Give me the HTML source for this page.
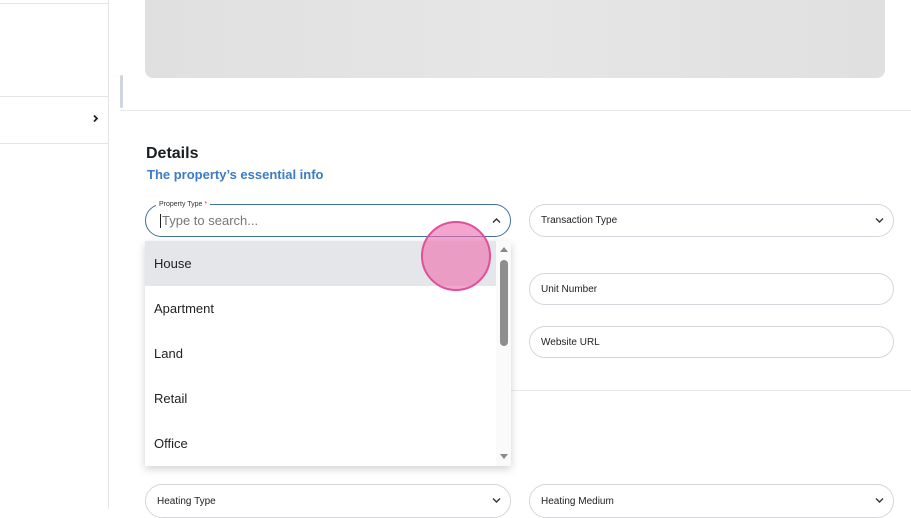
<!DOCTYPE html>
<html><head><style>
*{box-sizing:border-box;margin:0;padding:0}
body{width:911px;height:509px;overflow:hidden;background:#fff;font-family:"Liberation Sans",Arial,sans-serif;position:relative;color:#222}
.a{position:absolute}
.f{position:absolute;border:1px solid #d3d6da;border-radius:17px;font-size:10px;color:#222;padding-left:11px;display:flex;align-items:center}
.chev{position:absolute;right:9px;top:50%;margin-top:-4px}
.item{height:45px;line-height:45px;padding-left:9px;font-size:13px;color:#222}
</style></head><body>
<div class="a" style="left:0;top:0;width:109px;height:509px;border-right:1px solid #e3e5e8"></div>
<div class="a" style="left:0;top:3px;width:108px;height:1px;background:#e3e5e8"></div>
<div class="a" style="left:0;top:96px;width:108px;height:1px;background:#e3e5e8"></div>
<div class="a" style="left:0;top:143px;width:108px;height:1px;background:#e3e5e8"></div>
<svg class="a" style="left:92px;top:114px" width="7" height="9"><path d="M2 1.5L5 4.5L2 7.5" stroke="#222" stroke-width="1.8" fill="none"/></svg>
<div class="a" style="left:120px;top:75px;width:3px;height:33px;background:#cfd6e2;border-radius:2px"></div>
<div class="a" style="left:145px;top:-10px;width:740px;height:88px;background:linear-gradient(90deg,#e0e0e0,#e6e6e6 50%,#e0e0e0);border-radius:8px"></div>
<div class="a" style="left:120px;top:110px;width:791px;height:1px;background:#e6e8ea"></div>
<div class="a" style="left:511px;top:390px;width:400px;height:1px;background:#e6e8ea"></div>
<div class="a" style="left:146px;top:145px;font-size:16px;font-weight:bold;color:#1a1d22">Details</div>
<div class="a" style="left:147px;top:167px;font-size:13px;font-weight:bold;color:#3b7cc4">The property’s essential info</div>

<div class="f" style="left:145px;top:204px;width:366px;height:33px;border-color:#41709e;font-size:13px;color:#777;padding-left:14px"><span style="border-left:1px solid #222;padding-left:1px;line-height:14px">Type to search...</span>
<svg class="chev" width="9" height="7"><path d="M1 5.5L4.5 2L8 5.5" stroke="#333" stroke-width="1.4" fill="none"/></svg></div>
<div class="a" style="left:156px;top:200px;background:#fff;padding:0 3px;font-size:7px;color:#333;line-height:9px">Property Type <span style="color:#d33">*</span></div>

<div class="a" style="left:145px;top:241px;width:366px;height:225px;background:#fff;box-shadow:0 3px 8px rgba(0,0,0,.18);overflow:hidden">
<div class="item" style="background:#e5e6ea;width:351px">House</div>
<div class="item">Apartment</div>
<div class="item">Land</div>
<div class="item">Retail</div>
<div class="item">Office</div>
<div class="a" style="left:351px;top:0;width:15px;height:225px;background:#fafafa"></div>
<svg class="a" style="left:354px;top:4px" width="10" height="8"><path d="M1 7L5 2L9 7Z" fill="#888"/></svg>
<div class="a" style="left:355px;top:19px;width:8px;height:86px;background:#8e8e8e;border-radius:4px"></div>
<svg class="a" style="left:354px;top:212px" width="10" height="8"><path d="M1 1L5 6L9 1Z" fill="#888"/></svg>
</div>

<div class="f" style="left:529px;top:204px;width:365px;height:33px">Transaction Type<svg class="chev" width="9" height="7"><path d="M1 1.5L4.5 5L8 1.5" stroke="#333" stroke-width="1.4" fill="none"/></svg></div>
<div class="f" style="left:529px;top:273px;width:365px;height:32px">Unit Number</div>
<div class="f" style="left:529px;top:326px;width:365px;height:32px">Website URL</div>
<div class="f" style="left:145px;top:484px;width:366px;height:34px">Heating Type<svg class="chev" width="9" height="7"><path d="M1 1.5L4.5 5L8 1.5" stroke="#333" stroke-width="1.4" fill="none"/></svg></div>
<div class="f" style="left:529px;top:484px;width:365px;height:34px">Heating Medium<svg class="chev" width="9" height="7"><path d="M1 1.5L4.5 5L8 1.5" stroke="#333" stroke-width="1.4" fill="none"/></svg></div>

<div class="a" style="left:421px;top:221px;width:70px;height:70px;border-radius:50%;background:rgba(238,110,175,.62);border:2px solid #e0509a"></div>
</body></html>
